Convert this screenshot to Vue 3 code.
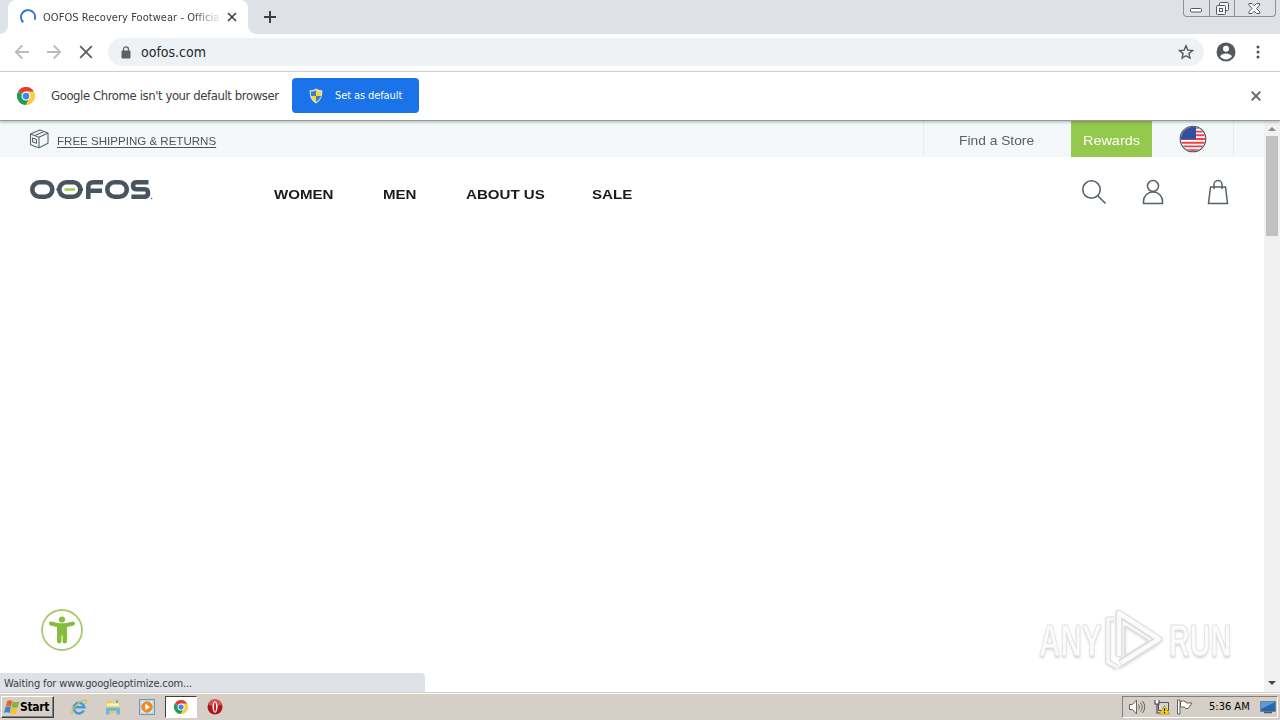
<template>
  <div class="desktop">
    <!-- Tab strip -->
    <header class="tabstrip">
      <div class="tab">
        <svg class="spinner" viewBox="0 0 16 16" fill="none" stroke="#2f72d2" stroke-width="2">
          <path d="M3.2 13.2A7 7 0 1 1 14.6 10.6" />
        </svg>
        <span class="tab-title">OOFOS Recovery Footwear - Official</span>
        <svg class="tab-close" viewBox="0 0 10 10" stroke="#3c4043" stroke-width="1.6">
          <path d="M1 1l8 8M9 1L1 9" />
        </svg>
      </div>
      <svg class="tab-new" viewBox="0 0 12 12" stroke="#3c4043" stroke-width="2">
        <path d="M6 0v12M0 6h12" />
      </svg>
      <div class="win-controls">
        <span class="win-btn win-btn--min">
          <svg width="13" height="5" viewBox="0 0 13 5"><rect x=".5" y=".5" width="11" height="3.5" rx="1" fill="#fff" stroke="#55585e" /></svg>
        </span>
        <span class="win-btn win-btn--max">
          <svg width="13" height="13" viewBox="0 0 13 13" fill="#f5f6f8" stroke="#55585e">
            <rect x="3.5" y=".5" width="9" height="8" rx="1" />
            <rect x=".5" y="3.5" width="9" height="9" rx="1" />
            <rect x="3.5" y="6.5" width="3" height="3" />
          </svg>
        </span>
        <span class="win-btn win-btn--close">
          <svg width="13" height="11" viewBox="0 0 13 11" fill="#fff" stroke="#55585e">
            <path d="M1 .5h3l2.300 2.300L8.600.5h3v1.700L8.500 5.500l3.100 3.100v1.900h-3L6.300 8.200 4 10.500H1V8.600l3.100-3.100L1 2.200z" />
          </svg>
        </span>
      </div>
    </header>

    <!-- Toolbar -->
    <div class="toolbar">
      <svg class="tool tool--back" viewBox="0 0 16 16" fill="none" stroke="#b9bbbe" stroke-width="1.8">
        <path d="M15 8H2M8.300 1.500L1.800 8l6.500 6.500" />
      </svg>
      <svg class="tool tool--forward" viewBox="0 0 16 16" fill="none" stroke="#b9bbbe" stroke-width="1.800">
        <path d="M1 8h13M7.700 1.500L14.200 8l-6.500 6.500" />
      </svg>
      <svg class="tool tool--stop" viewBox="0 0 16 16" stroke="#5a5d61" stroke-width="1.800">
        <path d="M2.200 2.200l11.600 11.600M13.800 2.200L2.200 13.800" />
      </svg>
      <div class="omnibox">
        <svg class="lock" viewBox="0 0 10 13">
          <path d="M2.500 5V3.400a2.500 2.500 0 0 1 5 0V5" fill="none" stroke="#5f6368" stroke-width="1.300" />
          <rect x=".5" y="4.500" width="9" height="8" rx="1" fill="#5f6368" />
        </svg>
        <span class="url">oofos.com</span>
        <svg class="star" viewBox="0 0 16 16" fill="none" stroke="#54585d" stroke-width="1.400" stroke-linejoin="miter">
          <path d="M8 1.800l1.800 4.300 4.700.4-3.600 3.100 1.100 4.500L8 11.700l-4 2.400 1.100-4.500L1.500 6.500l4.700-.4z" />
        </svg>
      </div>
      <svg class="avatar" viewBox="0 0 20 20">
        <circle cx="10" cy="10" r="9.500" fill="#55585d" />
        <circle cx="10" cy="6.700" r="3" fill="#fff" />
        <path d="M4 14.200c1.200-2 3.800-2.800 6-2.800s4.800.8 6 2.800a7.200 7.200 0 0 1-12 0z" fill="#fff" />
      </svg>
      <svg class="kebab" viewBox="0 0 4 14" fill="#4f5257">
        <circle cx="2" cy="2" r="1.500" /><circle cx="2" cy="7" r="1.500" /><circle cx="2" cy="12" r="1.500" />
      </svg>
    </div>

    <!-- Default browser bar -->
    <div class="infobar">
      <svg class="chrome" viewBox="0 0 48 48">
        <path d="M24 24L3.200 12A24 24 0 0 1 44.800 12z" fill="#e33b2e" />
        <path d="M24 24L3.200 12A24 24 0 0 0 24 48l10.400-18z" fill="#219c52" />
        <path d="M24 24h10.400L24 48A24 24 0 0 0 44.800 12H24z" fill="#fdcc3b" />
        <circle cx="24" cy="24" r="12" fill="#fff" />
        <circle cx="24" cy="24" r="9" fill="#4484ed" />
      </svg>
      <span class="infobar-text">Google Chrome isn't your default browser</span>
      <button class="set-default">
        <svg class="shield" viewBox="0 0 14 16">
          <path d="M7 .5c2 1.300 4 1.800 6.300 1.800.3 6-1.300 10.200-6.300 13.200C2 12.500.4 8.300.7 2.300 3 2.300 5 1.800 7 .5z" fill="#dfe7e6" />
          <path d="M7 2v6H2c-.3-1.500-.3-3-.2-4.500C3.800 3.500 5.500 3 7 2z" fill="#3d7fc2" />
          <path d="M7 2v6h5c.3-1.500.3-3 .2-4.500C10.200 3.500 8.500 3 7 2z" fill="#f4d73c" />
          <path d="M7 8v6c-2.700-1.600-4.300-3.500-5-6z" fill="#f4d73c" />
          <path d="M7 8v6c2.700-1.600 4.300-3.500 5-6z" fill="#3d7fc2" />
        </svg>
        <span class="set-default-text">Set as default</span>
      </button>
      <svg class="infobar-close" viewBox="0 0 10 10" stroke="#5f6368" stroke-width="1.900">
        <path d="M.7.7l8.600 8.600M9.300.7L.7 9.300" />
      </svg>
    </div>

    <!-- Page -->
    <div class="viewport">
      <div class="page">
        <div class="promo">
          <svg class="box" viewBox="0 0 20 20" fill="none" stroke="#5b656e" stroke-width="1.100" stroke-linejoin="round">
            <path d="M1.500 5L11 1l8 3v10.300L10 18.800l-8.500-3zM1.500 5L10 8.300 19 4M10 8.300v10.500M6 6.600L15 2.600M3.500 9l4 1.400v3.800l-4-1.400z" />
          </svg>
          <a class="shipping"><span>FREE SHIPPING &amp; RETURNS</span></a>
          <div class="store"><span>Find a Store</span></div>
          <div class="rewards"><span>Rewards</span></div>
          <div class="country">
            <svg class="flag" viewBox="0 0 28 28">
              <clipPath id="flag-clip"><circle cx="14" cy="14" r="12" /></clipPath>
              <g clip-path="url(#flag-clip)">
                <path d="M0 0h28v28H0z" fill="#fff" />
                <path v-for="n in 7" :key="n" :d="`M0 ${n * 3.7 - 0.8}h28`" stroke="#ee4146" stroke-width="1.900" />
                <path d="M0 0h17v14.500H0z" fill="#2f509e" />
              </g>
              <circle cx="14" cy="14" r="12.800" fill="none" stroke="#47536b" stroke-width="1.100" />
            </svg>
          </div>
        </div>

        <div class="masthead">
          <svg class="logo" viewBox="0 0 124 22" fill="none" stroke="#4a545e" stroke-width="4.600">
            <rect x="3.300" y="3.300" width="20" height="14.400" rx="7.200" />
            <rect x="30.300" y="3.300" width="21" height="14.400" rx="7.200" />
            <path d="M27.500 10.500h4M50 10.500h4" stroke-width="3" />
            <path d="M35.500 10.500h10.500" stroke="#9bcb3c" stroke-width="2.400" />
            <path d="M59.300 20V8q0-4.700 5-4.700H74M60 11.800h13" />
            <rect x="78.300" y="3.300" width="19.500" height="14.400" rx="7.200" />
            <path d="M119.500 3.300h-11.700q-3.800 0-3.800 3.500t3.800 3.500h7.900q3.300 0 3.300 3.700t-3.600 3.700h-13" />
            <circle cx="122.700" cy="19.500" r=".7" stroke="none" fill="#4a545e" />
          </svg>
          <nav class="menu">
            <a v-for="item in menu" :key="item.label" :style="{ width: item.width + 'px' }">
              <span>{{ item.label }}</span>
            </a>
          </nav>
          <div class="actions">
            <svg width="26" height="26" viewBox="0 0 26 26" fill="none" stroke="#55616b" stroke-width="1.600">
              <circle cx="10.500" cy="10.500" r="8.700" /><path d="M16.700 16.700l7.800 7.800" />
            </svg>
            <svg width="22" height="26" viewBox="0 0 22 26" fill="none" stroke="#55616b" stroke-width="1.500">
              <circle cx="11" cy="7" r="5.500" /><path d="M1.500 24.500v-2c0-5.500 4-9.500 9.500-9.500s9.500 4 9.500 9.500v2z" />
            </svg>
            <svg width="22" height="26" viewBox="0 0 22 26" fill="none" stroke="#55616b" stroke-width="1.500">
              <path d="M3.500 8h15l2 16.500h-19zM7 10V5.500a4 4 0 0 1 8 0V10" />
            </svg>
          </div>
        </div>

        <!-- Accessibility launcher -->
        <svg class="a11y" viewBox="0 0 42 42">
          <circle cx="21" cy="21" r="20" fill="#fff" stroke="#abc96e" stroke-width="1.800" />
          <circle cx="21" cy="10.500" r="3.100" fill="#85bd3d" />
          <path d="M10 12.500l8 1.700h6l8-1.700q1.700-.1 2 1.600t-1.300 2.300l-6.700 1.600v14.500q-.2 1.900-2.300 1.900t-2.200-1.900v-6h-1v6q-.2 1.900-2.300 1.900T16 32.500V18l-6.700-1.600Q7.600 16 8 14.100t2-1.600z" fill="#85bd3d" />
        </svg>

        <!-- Watermark -->
        <div class="watermark">
          <span class="wm-text">ANY</span>
          <svg class="wm-play" viewBox="0 0 58 64" fill="none" stroke-linejoin="round">
            <path d="M9 10H3v43l9 5" stroke="#dadada" stroke-width="5" />
            <path d="M9 10H3v43l9 5" stroke="#f8f8f8" stroke-width="3.400" />
            <path d="M14 47V4l40 26-38 24" stroke="#d8d8d8" stroke-width="6.500" />
            <path d="M14 47V4l40 26-38 24" stroke="#fbfbfb" stroke-width="4.500" />
            <path d="M20 47V17l24 15-30 19M14 59l38-24" stroke="#dedede" stroke-width="1.500" />
          </svg>
          <span class="wm-text wm-text--run">RUN</span>
        </div>

        <div class="status"><span>Waiting for www.googleoptimize.com...</span></div>
      </div>

      <div class="scrollbar">
        <svg class="scroll-arrow" viewBox="0 0 8 4" fill="#8b8b8b"><path d="M0 4l4-4 4 4z" /></svg>
        <div class="thumb" />
        <svg class="scroll-arrow scroll-arrow--down" viewBox="0 0 8 4" fill="#444"><path d="M0 0l4 4 4-4z" /></svg>
      </div>
    </div>

    <!-- Taskbar -->
    <footer class="taskbar">
      <button class="start">
        <svg class="winlogo" viewBox="0 0 16 16">
          <path d="M3.200 2Q5.800.4 8.400 1.900L7 7.700Q4.700 6.300 1.700 7.500z" fill="#e8662c" />
          <path d="M8.900 2.300Q12 4 15.500 2.300L13.800 8.200Q11 9.600 7.500 8z" fill="#7fb641" />
          <path d="M1.500 8Q4.500 6.800 6.900 8.200L5.600 14Q3.300 12.500 0 13.700z" fill="#3c87cf" />
          <path d="M7.400 8.500Q10.500 10.200 13.600 8.800L12 14.700Q9 16 5.900 14.300z" fill="#f5c432" />
        </svg>
        <span>Start</span>
      </button>
      <div class="quick">
        <span class="quick-item">
          <svg viewBox="0 0 18 18" fill="none">
            <path d="M13.800 12.500A5.300 5.300 0 1 1 14.300 9.300H4.500" stroke="#3b9edb" stroke-width="2.500" />
            <path d="M2.500 16C-1 13.500 9 3 14.800 1.800q2.500.2.700 3.900" stroke="#d9b850" stroke-width="1.300" />
          </svg>
        </span>
        <span class="quick-item">
          <svg viewBox="0 0 18 18">
            <path d="M2 2.500h5l1 2h8v11H2z" fill="#e9c964" />
            <path d="M3 5.500h12v4H3z" fill="#fff5c8" />
            <path d="M2 7.500h14v4H2z" fill="#f0d985" />
            <path d="M2 16.500v-5.700q0-1.200 1.200-1.200h11.600q1.200 0 1.200 1.200v5.700h-3.300v-3.700H5.300v3.700z" fill="#6db5df" />
            <path d="M12 2.500h2v2h-2z" fill="#5aa65a" />
          </svg>
        </span>
        <span class="quick-item">
          <svg viewBox="0 0 18 18">
            <rect x="1.500" y="1.500" width="15" height="15" fill="#b9d5ec" stroke="#6b9ac4" />
            <rect x="3.500" y="3.500" width="11" height="11" fill="#eef5fa" />
            <circle cx="9" cy="9" r="5.700" fill="#f18a1d" />
            <path d="M7.300 5.800L12 9l-4.700 3.200z" fill="#fff" />
          </svg>
        </span>
        <span class="quick-item quick-item--active">
          <svg class="task-chrome" viewBox="0 0 48 48">
            <path d="M24 24L3.200 12A24 24 0 0 1 44.800 12z" fill="#e33b2e" />
            <path d="M24 24L3.200 12A24 24 0 0 0 24 48l10.400-18z" fill="#219c52" />
            <path d="M24 24h10.400L24 48A24 24 0 0 0 44.800 12H24z" fill="#fdcc3b" />
            <circle cx="24" cy="24" r="12" fill="#fff" />
            <circle cx="24" cy="24" r="9" fill="#4484ed" />
          </svg>
        </span>
        <span class="quick-item">
          <svg viewBox="0 0 18 18">
            <circle cx="9" cy="9" r="7.500" fill="#b5121b" />
            <path d="M2 6.500a7.300 7.300 0 0 1 14 0q-7 3-14 0z" fill="#d8504f" />
            <ellipse cx="9" cy="9" rx="2.500" ry="5.700" fill="#fff" />
            <ellipse cx="9" cy="9" rx="1" ry="4.800" fill="#b5222a" />
          </svg>
        </span>
      </div>
      <div class="tray">
        <svg width="18" height="16" viewBox="0 0 18 16" fill="#fff" stroke="#666" stroke-width="1">
          <path d="M.5 5.500h3L7.500 1v14l-4-4.500h-3z" />
          <path d="M9.500 5.500q2 2.500 0 5M11.500 3.500q3.500 4.500 0 9M13.500 2q4.500 6 0 12" fill="none" />
        </svg>
        <svg width="16" height="16" viewBox="0 0 16 16">
          <path d="M4.500 3.500h10v8h-10z" fill="#d4d4d4" stroke="#555" />
          <path d="M1 1h4v4H1z" fill="#fff" />
          <path d="M1 1v4h4V1M3 5v9H7" fill="none" stroke="#444" stroke-width="1.100" />
          <path d="M10.500 6.500l5 8.500h-10z" fill="#f7d417" stroke="#b28b00" stroke-width=".7" />
          <path d="M10.500 9.300v3M10.500 13v1.300" stroke="#222" stroke-width="1.200" />
        </svg>
        <svg width="17" height="16" viewBox="0 0 17 16" fill="#fff" stroke="#606060">
          <path d="M3.500 2.500q3-1.500 5.500.5l.5 1h5.500l-2 3-2 2.500H8.500L7.500 8h-4z" /><path d="M.5 1h2.500v14H.5z" />
        </svg>
        <span class="clock">5:36 AM</span>
        <svg width="16" height="14" viewBox="0 0 16 14">
          <path d="M.5 1.500h15v10H.5z" fill="#2467b5" stroke="#75818e" />
          <path d="M1 2h14L1 9z" fill="#5a9ae0" />
          <path d="M4 12.500h8" stroke="#555" stroke-width="1.500" />
        </svg>
      </div>
    </footer>
  </div>
</template>

<script setup>
const menu = [
  { label: 'WOMEN', width: 109 },
  { label: 'MEN', width: 83 },
  { label: 'ABOUT US', width: 126 },
  { label: 'SALE', width: 60 },
]
</script>

<style>
body {
  margin: 0;
  overflow: hidden;
}
</style>

<style scoped>
*, *::before, *::after { box-sizing: border-box; }

.desktop {
  width: 1280px;
  height: 720px;
  display: flex;
  flex-direction: column;
  overflow: hidden;
  background: #fff;
  color: #3c4043;
  font-family: 'DejaVu Sans Condensed', 'DejaVu Sans', sans-serif;
  font-stretch: condensed;
}

svg { display: block; flex: none; }
span { white-space: nowrap; }
button { font-family: inherit; border: 0; margin: 0; }

/* ── Tab strip ── */
.tabstrip {
  height: 34px;
  flex: none;
  display: flex;
  align-items: flex-start;
  background: #dee1e8;
}

.tab {
  position: relative;
  width: 240px;
  height: 34px;
  margin-left: 8px;
  padding-left: 12px;
  display: flex;
  align-items: center;
  background: #fff;
  border-radius: 8px 8px 0 0;
}

.tab::before,
.tab::after {
  content: '';
  position: absolute;
  bottom: 0;
  width: 8px;
  height: 8px;
}

.tab::before {
  left: -8px;
  background: radial-gradient(circle at 0 0, transparent 7.5px, #fff 8px);
}

.tab::after {
  right: -8px;
  background: radial-gradient(circle at 100% 0, transparent 7.5px, #fff 8px);
}

.spinner { width: 16px; height: 16px; }

.tab-title {
  width: 176px;
  margin-left: 7px;
  overflow: hidden;
  font-size: 11px;
  letter-spacing: 0.05px;
  mask-image: linear-gradient(90deg, #000 150px, transparent 180px);
}

.tab-close { width: 10px; height: 10px; margin-left: 8px; }
.tab-new { width: 12px; height: 12px; margin: 11px 0 0 16px; }

.win-controls {
  margin-left: auto;
  margin-right: 4px;
  width: 93px;
  height: 17px;
  display: flex;
  border: 1px solid #8c9097;
  border-top: 0;
  border-radius: 0 0 4px 4px;
}

.win-btn {
  display: flex;
  justify-content: center;
  align-items: center;
}

.win-btn--min { width: 25px; padding-top: 5px; }
.win-btn--max { width: 26px; border: solid #8c9097; border-width: 0 1px; }
.win-btn--close { flex: 1; padding-right: 2px; }

/* ── Toolbar ── */
.toolbar {
  height: 38px;
  flex: none;
  display: flex;
  align-items: center;
  padding: 0 0 1px 14px;
  border-bottom: 1px solid #d9dadd;
}

.tool { width: 16px; height: 16px; margin-right: 16px; }
.tool--stop { margin-right: 14px; }

.omnibox {
  width: 1096px;
  height: 28px;
  padding: 0 10px 0 13px;
  display: flex;
  align-items: center;
  background: #eff2f5;
  border-radius: 14px;
}

.lock { width: 10px; height: 13px; }

.url {
  margin-left: 10px;
  font-size: 14px;
  color: #25282c;
}

.star { width: 16px; height: 16px; margin-left: auto; }
.avatar { width: 20px; height: 20px; margin-left: 12px; }
.kebab { width: 4px; height: 14px; margin-left: 20px; }

/* ── Default browser bar ── */
.infobar {
  position: relative;
  z-index: 1;
  height: 49px;
  flex: none;
  display: flex;
  align-items: center;
  padding: 0 19px 1px 17px;
  background: #fff;
  border-bottom: 1px solid #949a9c;
  box-shadow: 0 1px 3px rgba(60, 70, 75, 0.4);
}

.chrome { width: 18px; height: 18px; }

.infobar-text {
  width: 241px;
  margin-left: 16px;
  font-size: 13px;
  letter-spacing: -0.42px;
}

.set-default {
  width: 127px;
  height: 35px;
  padding: 0 0 0 17px;
  display: flex;
  align-items: center;
  background: #1a73e8;
  border-radius: 4px;
  color: #fff;
}

.shield { width: 14px; height: 16px; }
.set-default-text { margin-left: 12px; font-size: 11px; letter-spacing: -0.1px; }
.infobar-close { width: 10px; height: 10px; margin-left: auto; }

/* ── Page ── */
.viewport {
  flex: 1;
  min-height: 0;
  display: flex;
}

.page {
  position: relative;
  width: 1264px;
  font-family: 'Liberation Sans', Arial, sans-serif;
}

.promo {
  height: 36px;
  display: flex;
  align-items: center;
  padding-left: 29px;
  background: #f4f8f9;
}

.promo span,
.menu span {
  display: inline-block;
  transform-origin: left center;
}

.box { width: 20px; height: 20px; }

.shipping {
  width: 874px;
  padding: 4px 0 0 8px;
  font-size: 11px;
  line-height: 14px;
  color: #4b535b;
}

.shipping span {
  text-decoration: underline;
  text-underline-offset: 2px;
  transform: scaleX(1.05);
}

.store {
  width: 148px;
  height: 36px;
  padding: 13px 0 0 35px;
  border-left: 1px solid #e7ecee;
  font-size: 13px;
  line-height: 14px;
  color: #58616a;
}

.store span { transform: scaleX(1.06); }

.rewards {
  width: 81px;
  height: 36px;
  padding: 13px 0 0 12px;
  background: #93c94d;
  font-size: 13px;
  line-height: 14px;
  color: #fff;
}

.rewards span { transform: scaleX(1.11); }

.country {
  width: 82px;
  height: 36px;
  padding: 4px 0 0 27px;
  border-right: 1px solid #e7ecee;
}

.flag { width: 28px; height: 28px; }

.masthead {
  display: flex;
  align-items: flex-start;
  padding: 22px 35px 0 29px;
}

.logo { width: 124px; height: 22px; }

.menu {
  display: flex;
  margin: 8px 0 0 121px;
  font-size: 13px;
  line-height: 16px;
  font-weight: 700;
  color: #1a1a1a;
}

.menu span { transform: scaleX(1.16); }

.actions {
  display: flex;
  margin-left: auto;
  gap: 43px;
}

.actions svg:first-child { margin-right: -8px; }

/* ── Floating pieces ── */
.a11y {
  position: absolute;
  left: 41px;
  top: 488px;
  width: 42px;
  height: 42px;
}

.watermark {
  position: absolute;
  left: 1039px;
  top: 488px;
  height: 64px;
  display: flex;
  align-items: center;
}

.wm-text {
  width: 66px;
  font-size: 45px;
  font-weight: 700;
  line-height: 64px;
  color: #fbfbfb;
  -webkit-text-stroke: 1px #e2e2e2;
  text-shadow: 0 2px 3px #d4d4d4;
  transform: scaleX(0.66);
  transform-origin: left center;
}

.wm-play {
  width: 58px;
  height: 64px;
  filter: drop-shadow(0 1px 1px #d8d8d8);
}

.wm-text--run { margin-left: 6px; transform: scaleX(0.64); }

.status {
  position: absolute;
  left: 0;
  bottom: 0;
  width: 425px;
  height: 19px;
  padding-left: 4px;
  background: #dee1e8;
  border-radius: 0 4px 0 0;
  font: 11px/21px 'DejaVu Sans Condensed', 'DejaVu Sans', sans-serif;
  letter-spacing: -0.14px;
}

.scrollbar {
  width: 16px;
  display: flex;
  flex-direction: column;
  align-items: center;
  background: #f1f1f1;
}

.scroll-arrow { width: 8px; height: 4px; margin: 6px 0 5px; }
.scroll-arrow--down { margin: auto 0 7px; }
.thumb { width: 12px; height: 100px; background: #c1c1c1; }

/* ── Taskbar ── */
.taskbar {
  height: 28px;
  flex: none;
  display: flex;
  align-items: center;
  padding: 1px 2px 1px 1px;
  background: #d6cfc7;
  border-top: 1px solid #d4d0c8;
  box-shadow: inset 0 1px #fff;
}

.start {
  width: 53px;
  height: 22px;
  padding: 0 0 0 2px;
  display: flex;
  align-items: center;
  background: #d6cfc7;
  border: solid;
  border-width: 1px;
  border-color: #fff #404040 #404040 #fff;
  box-shadow: inset -1px -1px #808080;
  color: #000;
  font-size: 12px;
  font-weight: 700;
  letter-spacing: -0.3px;
}

.winlogo { width: 16px; height: 16px; }

.quick {
  display: flex;
  align-items: center;
  margin-left: 9px;
  gap: 2px;
}

.quick-item {
  width: 32px;
  height: 22px;
  display: flex;
  justify-content: center;
  align-items: center;
}

.quick-item svg { width: 18px; height: 18px; }
.quick-item .task-chrome { width: 14px; height: 14px; }

.quick-item--active {
  background: #fff;
  border: 1px solid;
  border-color: #404040 #fff #fff #404040;
}

.tray {
  width: 156px;
  height: 22px;
  margin-left: auto;
  padding-left: 6px;
  display: flex;
  align-items: center;
  border: 1px solid;
  border-color: #808080 #fff #fff #808080;
}

.tray svg { margin-right: 7px; }
.tray svg:last-child { margin-right: 0; }

.clock {
  width: 51px;
  margin-left: 8px;
  font-size: 11px;
  color: #000;
}
</style>
